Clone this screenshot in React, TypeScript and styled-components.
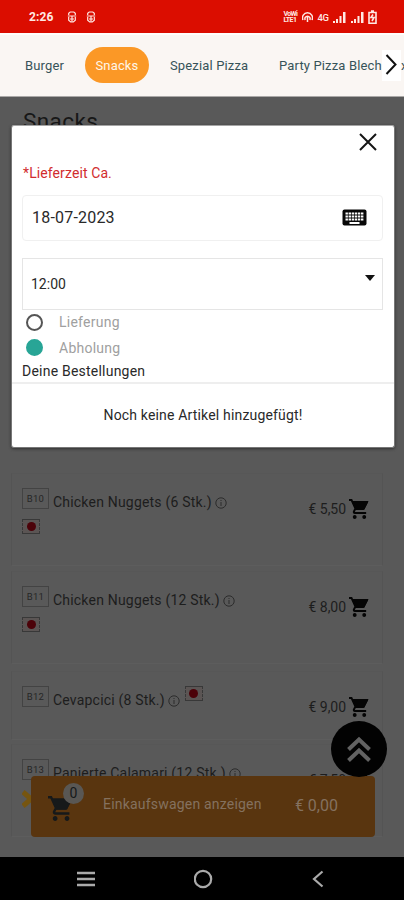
import React from "react";
import styled, { createGlobalStyle } from "styled-components";

const GlobalStyle = createGlobalStyle`
  * { box-sizing: border-box; }
  body { margin: 0; background: #595959; font-family: Roboto, "Liberation Sans", sans-serif; }
`;

const Phone = styled.div`
  position: relative;
  width: 404px;
  height: 900px;
  overflow: hidden;
  display: flex;
  flex-direction: column;
  background: #595959;
`;

const StatusBar = styled.header`
  flex: none;
  height: 33px;
  padding: 1px 27px 0 29px;
  display: flex;
  align-items: center;
  background: #db0d00;
  color: #ffe9e3;
`;

const Clock = styled.span`
  width: 38px;
  font-size: 12px;
  font-weight: 700;
  letter-spacing: 0.1px;
`;

const StatusIcons = styled.div<{ $end?: boolean }>`
  display: flex;
  align-items: center;
  gap: ${(p) => (p.$end ? "4.5px" : "8.5px")};
  margin-left: ${(p) => (p.$end ? "auto" : "0")};
  svg { display: block; }
`;

const VoLte = styled.span`
  display: flex;
  flex-direction: column;
  width: 14px;
  font-size: 7px;
  font-weight: 700;
  line-height: 6px;
  letter-spacing: -0.6px;
`;

const Network = styled.span`
  font-size: 9.5px;
  font-weight: 500;
  letter-spacing: -0.4px;
`;

const Categories = styled.nav`
  flex: none;
  height: 64px;
  padding: 0 0 1px 25px;
  display: flex;
  align-items: center;
  background: #faf6f3;
  border-top: 2px solid #fffdfb;
  border-bottom: 1px solid #aaa8a7;
  white-space: nowrap;
  overflow: hidden;
`;

const Category = styled.a<{ $w: number; $ls?: number }>`
  flex: none;
  width: ${(p) => p.$w}px;
  font-size: 13px;
  letter-spacing: ${(p) => p.$ls ?? 0.15}px;
  color: #365359;
`;

const ActiveCategory = styled.a`
  flex: none;
  width: 64px;
  height: 36px;
  margin-right: 21px;
  border-radius: 18px;
  display: flex;
  align-items: center;
  justify-content: center;
  background: #fb9826;
  color: #fff6e8;
  font-size: 13px;
  letter-spacing: 0.15px;
`;

const NextCategory = styled.button`
  flex: none;
  width: 19px;
  height: 31px;
  padding: 0;
  border: 0;
  background: #fff;
  svg { display: block; }
`;

const Page = styled.main`
  flex: 1;
  min-height: 0;
  overflow: hidden;
  color: #1d1d1d;
`;

const Title = styled.h1`
  height: 376px;
  margin: 0;
  padding: 10px 0 0 23px;
  font-size: 22.5px;
  line-height: 28px;
  font-weight: 400;
  letter-spacing: 0.4px;
  color: #171717;
`;

const Product = styled.article<{ $h: number; $gap: number }>`
  height: ${(p) => p.$h}px;
  margin: 0 21px ${(p) => p.$gap}px 11px;
  padding: 14px 13px 0 10px;
  display: flex;
  justify-content: space-between;
  border: 1px solid #545454;
  border-top-color: #575757;
  border-bottom-color: #5d5d5d;
`;

const ProductInfo = styled.div`
  display: flex;
  flex-direction: column;
  align-items: flex-start;
  gap: 9px;
`;

const NameLine = styled.div`
  display: flex;
  align-items: flex-start;
  height: 22px;
`;

const Code = styled.span`
  width: 27px;
  height: 21px;
  margin-right: 4px;
  display: flex;
  align-items: center;
  justify-content: center;
  border: 1px solid #434343;
  font-size: 9.5px;
  letter-spacing: 0.3px;
  color: #262626;
`;

const Name = styled.span`
  padding-top: 6px;
  font-size: 14px;
  line-height: 17px;
  letter-spacing: 0.2px;
  white-space: nowrap;
`;

const InfoMark = styled.span`
  padding: 9px 5px 0 3px;
  svg { display: block; }
`;

const Flag = styled.span`
  display: flex;
  align-items: center;
  justify-content: center;
  width: 18px;
  height: 15px;
  border: 1px solid #383838;
  border-style: solid dashed;
  background: #5b5554;
  &::after {
    content: "";
    width: 9px;
    height: 9px;
    border-radius: 50%;
    background: #4c0209;
  }
`;

const Price = styled.div`
  display: flex;
  align-items: center;
  gap: 3px;
  height: 24px;
  margin-top: 9px;
  font-size: 14px;
  letter-spacing: -0.05px;
  svg { display: block; }
`;

const Star = styled.div`
  display: flex;
  svg { display: block; }
`;

const CartBar = styled.aside`
  position: absolute;
  left: 31px;
  top: 776px;
  width: 344px;
  height: 61px;
  padding: 0 37px 0 17px;
  display: flex;
  align-items: center;
  border-radius: 4px;
  background: #59350f;
  color: #84715f;
  font-size: 14px;
`;

const CartIcon = styled.div`
  position: relative;
  width: 55px;
  padding-top: 3px;
  svg { display: block; }
`;

const Count = styled.span`
  position: absolute;
  left: 15px;
  top: -10px;
  width: 21px;
  height: 21px;
  border-radius: 50%;
  display: flex;
  align-items: center;
  justify-content: center;
  background: #595754;
  color: #16191a;
`;

const CartLabel = styled.span`
  letter-spacing: 0.2px;
  padding-bottom: 6px;
`;

const Total = styled.span`
  margin-left: auto;
  padding-bottom: 2px;
  font-size: 16px;
`;

const ScrollTop = styled.button`
  position: absolute;
  left: 331px;
  top: 721px;
  width: 56px;
  height: 56px;
  padding: 0;
  border: 0;
  border-radius: 50%;
  display: grid;
  place-items: center;
  background: #020202;
`;

const Dialog = styled.section`
  position: absolute;
  left: 11px;
  top: 125px;
  width: 384px;
  height: 323px;
  display: flex;
  flex-direction: column;
  background: #fff;
  border: 1px solid #777;
  border-top-color: #a5a5a5;
  border-radius: 3px;
  box-shadow: 0 1px 3px #303030;
  color: #292929;
`;

const DialogHead = styled.div`
  height: 37px;
  padding: 7px 17px 0;
  display: flex;
  justify-content: flex-end;
`;

const Form = styled.div`
  padding: 0 11px 0 10px;
  display: flex;
  flex-direction: column;
`;

const FormLabel = styled.label`
  height: 32px;
  padding: 2px 0 0 1px;
  font-size: 14px;
  line-height: 17px;
  letter-spacing: 0.1px;
  color: #d12c2e;
`;

const DateField = styled.div`
  height: 46px;
  margin-bottom: 17px;
  padding: 0 15px 2px 9px;
  display: flex;
  align-items: center;
  justify-content: space-between;
  border: 1px solid #f0f0f0;
  border-radius: 4px;
  font-size: 16px;
  letter-spacing: 0.2px;
`;

const TimeField = styled.div`
  height: 52px;
  padding: 0 7px 0 8px;
  display: flex;
  align-items: center;
  justify-content: space-between;
  border: 1px solid #e5e5e5;
  font-size: 14px;
  svg { margin-bottom: 12px; }
`;

const Option = styled.label`
  height: 25.5px;
  padding: 0 0 1px 4px;
  display: flex;
  align-items: center;
  gap: 16px;
  font-size: 14px;
  letter-spacing: 0.25px;
  color: #a0a0a0;
`;

const Radio = styled.span<{ $on?: boolean }>`
  width: 17px;
  height: 17px;
  border-radius: 50%;
  border: 2px solid ${(p) => (p.$on ? "#28a596" : "#555")};
  background: ${(p) => (p.$on ? "#28a596" : "#fff")};
`;

const OrdersHeading = styled.div`
  height: 21px;
  line-height: 21px;
  font-size: 14px;
  letter-spacing: 0.22px;
`;

const EmptyOrders = styled.div`
  flex: 1;
  padding-top: 23px;
  border-top: 2px solid #eee;
  text-align: center;
  font-size: 14px;
  line-height: 17px;
  letter-spacing: 0.17px;
`;

const SystemNav = styled.footer`
  flex: none;
  height: 43px;
  padding: 1px 77px 0 76px;
  display: flex;
  align-items: center;
  justify-content: space-between;
  background: #000;
  svg { display: block; }
`;

const AppGlyph = () => (
  <svg width="10" height="12" viewBox="0 0 10 12" fill="none" stroke="currentColor" strokeWidth="1.2">
    <path d="M1.7 4V2.2L3.2 1h3.6l1.5 1.2V4M1.7 6v3.2l2 1.8h2.6l2-1.8V6M.8 5h8.4M5 5v6M3 8h4" />
  </svg>
);

const Signal = () => (
  <svg width="13" height="11" viewBox="0 0 13 11" fill="currentColor">
    <path d="M0 9h2v2H0zM3 7h2v4H3zM6.5 4h2v7h-2zM10 0h2.5v11H10z" />
  </svg>
);

const Cart = ({ size = 24, color = "#050505" }: { size?: number; color?: string }) => (
  <svg width={size} height={size} viewBox="1 2 21 20" fill={color} preserveAspectRatio="none">
    <path d="M4 4h17.5L17 12.7H8z" />
    <path d="M7 18c-1.1 0-1.99.9-1.99 2S5.9 22 7 22s2-.9 2-2-.9-2-2-2zM1 2v2h2l3.6 7.59-1.35 2.45c-.16.28-.25.61-.25.96 0 1.1.9 2 2 2h12v-2H7.42c-.14 0-.25-.11-.25-.25l.03-.12.9-1.63h7.45c.75 0 1.41-.41 1.75-1.03l3.58-6.49c.08-.14.12-.31.12-.48 0-.55-.45-1-1-1H5.21l-.94-2H1zm16 16c-1.1 0-1.99.9-1.99 2s.89 2 1.99 2 2-.9 2-2-.9-2-2-2z" />
  </svg>
);

const Info = () => (
  <svg width="12" height="12" viewBox="0 0 12 12" fill="none" stroke="#272727" strokeWidth="0.9">
    <circle cx="6" cy="6" r="5.2" />
    <path d="M6 5v4M6 3v1" />
  </svg>
);

type Item = { code: string; name: string; price: string; h: number; gap: number; inline?: boolean; star?: boolean };

const items: Item[] = [
  { code: "B10", name: "Chicken Nuggets (6 Stk.)", price: "€ 5,50", h: 93, gap: 5 },
  { code: "B11", name: "Chicken Nuggets (12 Stk.)", price: "€ 8,00", h: 93, gap: 7 },
  { code: "B12", name: "Cevapcici (8 Stk.)", price: "€ 9,00", h: 69, gap: 4, inline: true },
  { code: "B13", name: "Panierte Calamari (12 Stk.)", price: "€ 7,50", h: 93, gap: 5, star: true },
];

const ProductRow = ({ item }: { item: Item }) => (
  <Product $h={item.h} $gap={item.gap}>
    <ProductInfo>
      <NameLine>
        <Code>{item.code}</Code>
        <Name>{item.name}</Name>
        <InfoMark><Info /></InfoMark>
        {item.inline && <Flag />}
      </NameLine>
      {item.star ? (
        <Star>
          <svg width="18" height="18" viewBox="0 0 18 18" stroke="#765510" strokeWidth="5">
            <path d="M1 2l16 14M1 16L17 2" />
          </svg>
        </Star>
      ) : (
        !item.inline && <Flag />
      )}
    </ProductInfo>
    <Price>
      {item.price}
      <Cart size={20} />
    </Price>
  </Product>
);

export default function App() {
  return (
    <Phone>
      <GlobalStyle />
      <StatusBar>
        <Clock>2:26</Clock>
        <StatusIcons><AppGlyph /><AppGlyph /></StatusIcons>
        <StatusIcons $end>
          <VoLte><span>VoWi</span><span>LTE1</span></VoLte>
          <svg width="11" height="10" viewBox="0 0 11 10" fill="none" stroke="currentColor" strokeWidth="1.5">
            <path d="M1 8a5 5 0 1 1 9 0M3.2 8a2.6 2.6 0 1 1 4.6 0M5.5 5v5" />
          </svg>
          <Network>4G</Network>
          <Signal />
          <Signal />
          <svg width="9" height="14" viewBox="0 0 9 14" fill="none" stroke="currentColor" strokeWidth="1.6">
            <path d="M1 2.5h7v10.7H1zM3 1h3M5 4.5L3 7.5h3L4 11" />
          </svg>
        </StatusIcons>
      </StatusBar>
      <Categories>
        <Category $w={60}>Burger</Category>
        <ActiveCategory>Snacks</ActiveCategory>
        <Category $w={109}>Spezial Pizza</Category>
        <Category $w={103}>Party Pizza Blech</Category>
        <NextCategory aria-label="Weiter">
          <svg width="19" height="31" viewBox="0 0 19 31" fill="none" stroke="#111" strokeWidth="2">
            <path d="M4.5 5l9 9.5-9 9.5" />
          </svg>
        </NextCategory>
        <Category $w={10}>x</Category>
      </Categories>
      <Page>
        <Title>Snacks</Title>
        {items.map((item) => <ProductRow key={item.code} item={item} />)}
      </Page>
      <SystemNav>
        <svg width="20" height="16" viewBox="0 0 20 16" stroke="#aaa" strokeWidth="2.5">
          <path d="M1 2h18M1 8h18M1 14h18" />
        </svg>
        <svg width="20" height="20" viewBox="0 0 20 20" fill="none" stroke="#aaa" strokeWidth="2.2">
          <circle cx="9" cy="10" r="8.2" />
        </svg>
        <svg width="16" height="18" viewBox="0 0 16 18" fill="none" stroke="#aaa" strokeWidth="2.2">
          <path d="M11.5 1.5L3 9l8.5 7.5" />
        </svg>
      </SystemNav>
      <CartBar>
        <CartIcon>
          <Cart size={25} color="#16191a" />
          <Count>0</Count>
        </CartIcon>
        <CartLabel>Einkaufswagen anzeigen</CartLabel>
        <Total>€ 0,00</Total>
      </CartBar>
      <ScrollTop aria-label="Nach oben">
        <svg width="24" height="26" viewBox="0 0 24 26" fill="none" stroke="#626262" strokeWidth="4">
          <path d="M1.5 13.5L12 3.5l10.5 10M1.5 24.5L12 14.5l10.5 10" />
        </svg>
      </ScrollTop>
      <Dialog>
        <DialogHead>
          <svg width="18" height="18" viewBox="0 0 18 18" stroke="#151515" strokeWidth="2">
            <path d="M1 1l16 16M17 1L1 17" />
          </svg>
        </DialogHead>
        <Form>
          <FormLabel>*Lieferzeit Ca.</FormLabel>
          <DateField>
            18-07-2023
            <svg width="25" height="17" viewBox="0 0 25 17">
              <rect x=".5" y=".5" width="24" height="16" rx="2" fill="#080808" />
              <path d="M3.5 4.5h18M3.5 7.5h18M3.5 10.5h18" stroke="#fff" strokeWidth="2" strokeDasharray="2.4 .7" />
              <path d="M7.5 14h10" stroke="#fff" strokeWidth="2" />
            </svg>
          </DateField>
          <TimeField>
            12:00
            <svg width="10" height="6" viewBox="0 0 10 6"><path d="M0 0h10L5 6z" fill="#111" /></svg>
          </TimeField>
          <Option><Radio />Lieferung</Option>
          <Option><Radio $on />Abholung</Option>
          <OrdersHeading>Deine Bestellungen</OrdersHeading>
        </Form>
        <EmptyOrders>Noch keine Artikel hinzugefügt!</EmptyOrders>
      </Dialog>
    </Phone>
  );
}
